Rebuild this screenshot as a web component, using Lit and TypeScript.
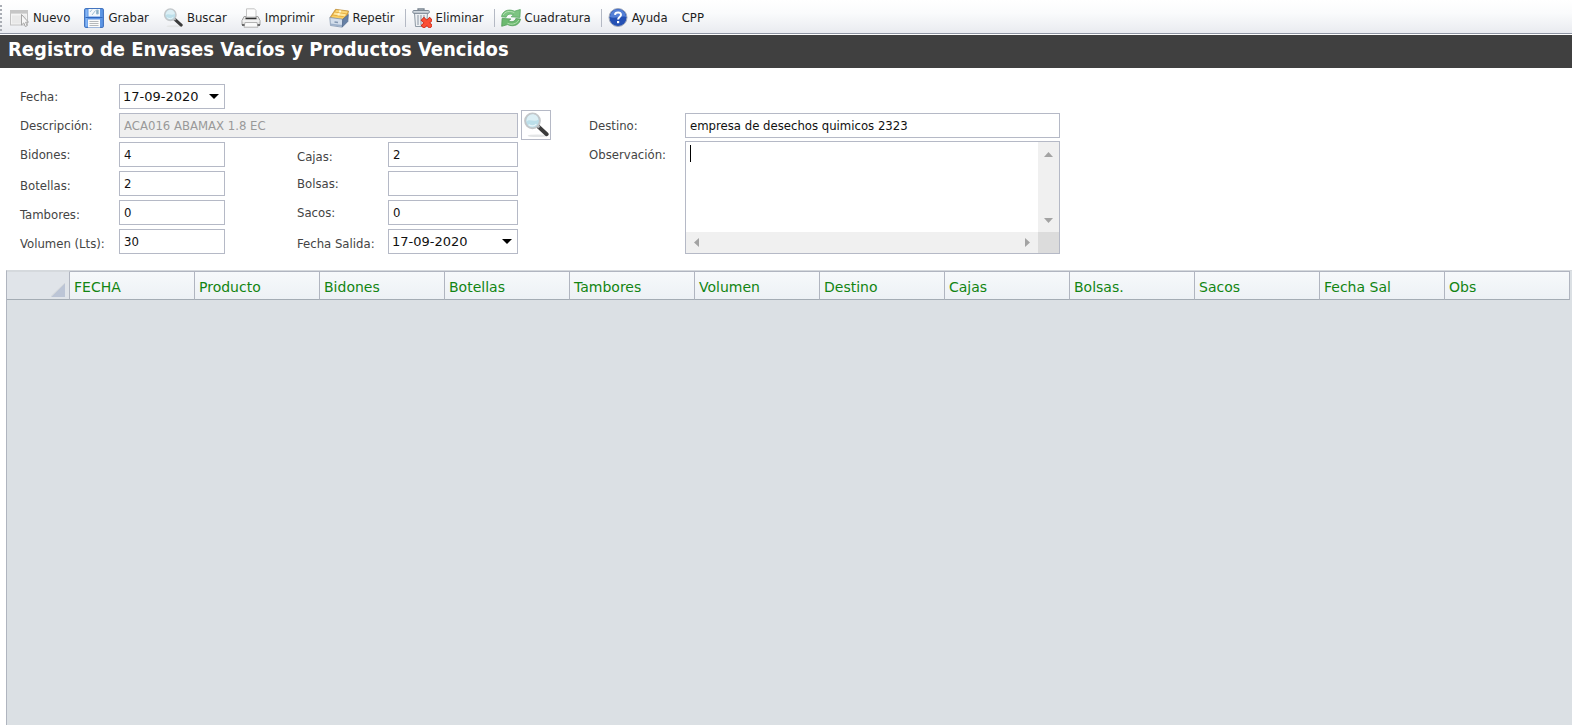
import { LitElement, html, css, TemplateResult } from "lit";
import { customElement, property } from "lit/decorators.js";

const icons: Record<string, TemplateResult> = {
  nuevo: html`<svg viewBox="0 0 20 20" width="20" height="20" aria-hidden="true">
    <rect x="1.5" y="2.5" width="17" height="14.5" fill="#f4f4f4" stroke="#c2c2c2" />
    <rect x="1" y="2" width="18" height="3.6" fill="#c6c6c6" />
    <path d="M3 7.5h14v8H3z" fill="#e9e9e9" />
    <path d="M12.5 6.500v10.500l2.300-2.100 1.500 3.600 1.900-.8-1.600-3.500h2.900z" fill="#f7f7f7" stroke="#9d9d9d" stroke-width=".9" />
  </svg>`,
  grabar: html`<svg viewBox="0 0 20 20" width="20" height="20" aria-hidden="true">
    <rect x=".6" y=".6" width="18.800" height="18.800" rx="1" fill="#5b95e4" stroke="#3a6cba" />
    <rect x="1.500" y="1.500" width="2" height="17" fill="#86b6f4" />
    <rect x="4.500" y="1" width="11.500" height="7.500" fill="#f3f8fb" />
    <path d="M6 4l2-2.500M8 7l3.500-4.500M12.500 2h1.700v4h-1.700z" stroke="#9fbfd2" fill="#7fa5bd" />
    <path d="M1.500 9.500h17" stroke="#2f66bd" />
    <rect x="4" y="11.500" width="12" height="8" fill="#fafafa" />
    <path d="M5.500 13.500h9M5.500 15.500h9M5.500 17.500h9" stroke="#b5b8bb" />
  </svg>`,
  lupa: html`<svg viewBox="0 0 20 20" width="100%" height="100%" aria-hidden="true">
    <ellipse cx="11" cy="18.300" rx="7.500" ry="1" fill="#e3e5e6" />
    <path d="M11.300 10.800l6.900 6.300" stroke="#3b3b3b" stroke-width="3" stroke-linecap="round" />
    <path d="M11 10.400l1.600 1.500" stroke="#a9adb0" stroke-width="2" />
    <circle cx="7.300" cy="6.800" r="5.700" fill="#bcdfea" stroke="#c3c7ca" stroke-width="1.500" />
    <path d="M2.800 7.500c2-2.800 5.500.5 9-1.600-.2-2.500-2-4.200-4.500-4.200S2.600 4 2.800 7.500z" fill="#dceff5" />
    <path d="M4.300 9.700c2 1.300 4.400 1.200 6-.4" stroke="#e9f6fa" fill="none" />
  </svg>`,
  imprimir: html`<svg viewBox="0 0 20 20" width="20" height="20" aria-hidden="true">
    <path d="M5.500 9V.800h8L15 2.500V9z" fill="#fdfdfd" stroke="#c4c4c4" />
    <path d="M3 8.500L1 12.500v4.500h18v-4.500l-2-4h-2V10H5V8.500z" fill="#e4e4e4" stroke="#a3a3a3" />
    <path d="M4.500 10.500h11" stroke="#333" stroke-width="1.400" />
    <path d="M1.500 13h17" stroke="#fff" />
    <path d="M4 14.500h12l1 4.700H3z" fill="#fafafa" stroke="#b3b3b3" />
    <path d="M1 17h2.500M16.500 17H19" stroke="#4d4d4d" stroke-width="1.400" />
  </svg>`,
  repetir: html`<svg viewBox="0 0 20 20" width="20" height="20" aria-hidden="true">
    <path d="M1 9.500L6.500 1.300 19.500 3l-1.500 7.500L13.500 14z" fill="#e6ac3f" stroke="#b98a35" stroke-width=".7" />
    <path d="M7.300 1.900l11.500 1.500-1 2L6.200 3.700z" fill="#fbd777" />
    <path d="M5.500 4.600L17 6.300l-1 2.200L4.200 6.600z" fill="#ffe79a" />
    <path d="M3.600 7.400l11.600 1.800-1 2L2.200 9.200z" fill="#fbcf62" />
    <path d="M10.300 2.300l2 .3-.5 1.900-2-.3zM9 5.200l2 .3-.6 2-2-.3z" fill="#fff6d3" />
    <path d="M.8 9.500l13 1.700-.5 8L1.500 17.500z" fill="#d3deeb" stroke="#8295ae" stroke-width=".8" />
    <path d="M1.500 15.500l12 1.600v1.600L2 17.200z" fill="#9cb0ca" />
    <path d="M13.800 11.200l5.500-4.700-.5 7-5.500 5.500z" fill="#6680a5" stroke="#566d90" stroke-width=".8" />
    <path d="M5.500 14l3.500.5" stroke="#8297b1" stroke-width="1.500" />
  </svg>`,
  eliminar: html`<svg viewBox="0 0 20 20" width="20" height="20" aria-hidden="true">
    <path d="M2.500 5h13l-1 13.500h-11z" fill="#edf0f3" stroke="#8e99a4" />
    <path d="M6 7v10M9 7v10M12 7v4" stroke="#a0aab4" stroke-width="1.300" />
    <path d="M6 2.500V1h6v1.500" fill="none" stroke="#77828e" stroke-width="1.300" />
    <rect x=".8" y="2.500" width="16.500" height="2.800" rx="1" fill="#cfd6dd" stroke="#7c8894" />
    <path d="M12 12.200l5.600 5.300M17.600 12.200L12 17.500" stroke="#c4281a" stroke-width="4.800" stroke-linecap="square" />
    <path d="M12 12.200l5.600 5.300M17.600 12.200L12 17.500" stroke="#fb4f34" stroke-width="3.400" stroke-linecap="square" />
  </svg>`,
  cuadratura: html`<svg viewBox="0 0 20 20" width="20" height="20" aria-hidden="true">
    <path d="M.6 8.800C1 3.500 7 .2 13.500 3.200l5.800-1.700-.4 7.900-8.700-.6 2.300-1.900C9.200 5.300 6 6.200 5.200 9.200z" fill="#7dc482" stroke="#5ba864" stroke-width=".8" />
    <path d="M19.400 11c-.4 5.300-6.400 8.600-12.900 5.600L.7 18.300l.4-7.900 8.700.6-2.300 1.900c3.300 1.600 6.500.7 7.300-2.300z" fill="#6cba70" stroke="#519c58" stroke-width=".8" />
    <path d="M2.200 7C4 3.500 8.500 2.300 13.300 4.600M6.500 15.300c4.300 1.800 9 .7 11.400-3.200" stroke="#b4e0b2" fill="none" />
  </svg>`,
  ayuda: html`<svg viewBox="0 0 20 20" width="20" height="20" aria-hidden="true">
    <circle cx="10" cy="9.500" r="9" fill="#2450b4" stroke="#a3abbb" />
    <path d="M2 9a8 7.700 0 0 1 16 0c-5-2-11 2.500-16 0z" fill="#5580d6" />
    <path d="M7 6.800c.3-3.200 6.200-3.200 6 .2-.1 2-2.900 2-2.900 4.500" fill="none" stroke="#fff" stroke-width="2" />
    <rect x="9" y="13" width="2.200" height="2.200" fill="#fff" />
  </svg>`,
};

@customElement("tool-bar")
class ToolBar extends LitElement {
  static styles = css`
    :host {
      display: flex;
      align-items: center;
      height: 34px;
      box-sizing: border-box;
      padding: 2px 0 0 9px;
      background:
        repeating-linear-gradient(#a9adb4 0 2px, transparent 2px 4px) 0 5px / 2px 26px no-repeat,
        linear-gradient(#ffffff, #fafbfc 40%, #e9ebf0);
      border-bottom: 1px solid #8f95a3;
      font: 13px/20px "DejaVu Sans Condensed", "DejaVu Sans", sans-serif;
    }
    .tool {
      display: flex;
      align-items: center;
      gap: 4px;
      margin-right: 14px;
      padding: 0;
      border: 0;
      background: none;
      font: inherit;
      color: #1e1e1e;
      white-space: nowrap;
    }
    .icon {
      width: 20px;
      height: 20px;
    }
    .before-rule {
      margin-right: 10px;
    }
    .rule {
      width: 1px;
      height: 18px;
      margin-right: 6px;
      background: #b4b9c4;
    }
  `;

  private tool(name: string, icon: string, rule = false) {
    return html`<button type="button" class="tool ${rule ? "before-rule" : ""}">
        ${icon ? html`<span class="icon">${icons[icon]}</span>` : ""}<span>${name}</span>
      </button>
      ${rule ? html`<span class="rule"></span>` : ""}`;
  }

  render() {
    return html`${this.tool("Nuevo", "nuevo")} ${this.tool("Grabar", "grabar")}
    ${this.tool("Buscar", "lupa")} ${this.tool("Imprimir", "imprimir")}
    ${this.tool("Repetir", "repetir", true)} ${this.tool("Eliminar", "eliminar", true)}
    ${this.tool("Cuadratura", "cuadratura", true)} ${this.tool("Ayuda", "ayuda")}
    ${this.tool("CPP", "")}`;
  }
}

@customElement("envases-form")
class EnvasesForm extends LitElement {
  static styles = css`
    :host {
      display: block;
      font: 13px/26px "DejaVu Sans Condensed", "DejaVu Sans", sans-serif;
      color: #444;
    }
    form {
      display: grid;
      grid-template-columns: 99px 106px 72px 91px 130px 3px 30px 38px 96px minmax(200px, 375px);
      grid-auto-rows: 29px;
      align-items: start;
      padding: 16px 20px 12px;
    }
    .c1 { grid-column: 1; }
    .c2 { grid-column: 2; }
    .c4 { grid-column: 4; }
    .c5 { grid-column: 5; }
    .c9 { grid-column: 9; }
    .c10 { grid-column: 10; }
    .wide { grid-column: 2 / 6; }
    .r1 { grid-row: 1; }
    .r2 { grid-row: 2; }
    .r3 { grid-row: 3; }
    .r4 { grid-row: 4; }
    .r5 { grid-row: 5; }
    .r6 { grid-row: 6; }
    .low { padding-top: 2px; }
    .field {
      box-sizing: border-box;
      width: 100%;
      height: 25px;
      margin: 0;
      padding: 1px 4px 0;
      border: 1px solid #b5b9c6;
      border-radius: 0;
      background: #fff;
      font: inherit;
      color: #111;
      outline: none;
    }
    .field:disabled {
      background: #efefef;
      color: #999;
    }
    .date {
      appearance: none;
      font: 13px/22px "DejaVu Sans", sans-serif;
      padding: 0 3px;
      background: #fff
        url("data:image/svg+xml,%3Csvg xmlns='http://www.w3.org/2000/svg' width='10' height='5'%3E%3Cpath d='M0 0h10L5 5z'/%3E%3C/svg%3E")
        right 5px center no-repeat;
    }
    .find {
      grid-column: 7;
      grid-row: 2;
      width: 30px;
      height: 30px;
      margin-top: -3px;
      padding: 1px;
      border: 1px solid #b5b9c6;
      background: #fff;
      display: grid;
    }
    .memo {
      grid-row: 3 / 7;
      align-self: start;
      position: relative;
      display: grid;
      grid-template-columns: 1fr 21px;
      grid-template-rows: 90px 21px;
      margin-top: -1px;
      border: 1px solid #b5b9c6;
    }
    .memo textarea {
      box-sizing: border-box;
      width: 100%;
      height: 100%;
      border: 0;
      margin: 0;
      padding: 2px 4px;
      resize: none;
      outline: none;
      font: inherit;
      overflow: hidden;
    }
    .caret {
      position: absolute;
      left: 4px;
      top: 3px;
      width: 1px;
      height: 17px;
      background: #000;
    }
    .bar {
      display: flex;
      justify-content: space-between;
      align-items: center;
      background: #f0f0f0;
    }
    .vertical {
      flex-direction: column;
      padding: 10px 0 9px;
    }
    .horizontal {
      padding: 0 8px;
    }
    .corner {
      background: #dcdcdc;
    }
    .arrow {
      display: block;
      fill: #a3a3a3;
    }
  `;

  private text(id: string, label: string, value: string, row: string, right = false, low = false) {
    return html`<label for=${id} class="${right ? "c4" : "c1"} ${row} ${low ? "low" : ""}">${label}</label>
      <input id=${id} class="field ${right ? "c5" : "c2"} ${row}" .value=${value} />`;
  }

  render() {
    return html`<form>
      <label for="fecha" class="c1 r1">Fecha:</label>
      <select id="fecha" class="field date c2 r1"><option>17-09-2020</option></select>
      <label for="descripcion" class="c1 r2">Descripción:</label>
      <input id="descripcion" class="field wide r2" disabled .value=${"ACA016 ABAMAX 1.8 EC"} />
      <button type="button" class="find" aria-label="Buscar producto">${icons.lupa}</button>
      ${this.text("bidones", "Bidones:", "4", "r3")}
      ${this.text("botellas", "Botellas:", "2", "r4", false, true)}
      ${this.text("tambores", "Tambores:", "0", "r5", false, true)}
      ${this.text("volumen", "Volumen (Lts):", "30", "r6", false, true)}
      ${this.text("cajas", "Cajas:", "2", "r3", true, true)}
      ${this.text("bolsas", "Bolsas:", "", "r4", true)}
      ${this.text("sacos", "Sacos:", "0", "r5", true)}
      <label for="salida" class="c4 r6 low">Fecha Salida:</label>
      <select id="salida" class="field date c5 r6"><option>17-09-2020</option></select>
      <label for="destino" class="c9 r2">Destino:</label>
      <input id="destino" class="field c10 r2" .value=${"empresa de desechos quimicos 2323"} />
      <label for="observacion" class="c9 r3">Observación:</label>
      <div class="memo c10">
        <textarea id="observacion" wrap="off"></textarea>
        <div class="bar vertical">
          <svg class="arrow" width="9" height="5"><path d="M0 5h9L4.500 0z" /></svg>
          <svg class="arrow" width="9" height="5"><path d="M0 0h9L4.500 5z" /></svg>
        </div>
        <div class="bar horizontal">
          <svg class="arrow" width="5" height="9"><path d="M5 0v9L0 4.500z" /></svg>
          <svg class="arrow" width="5" height="9"><path d="M0 0v9l5-4.500z" /></svg>
        </div>
        <div class="corner"></div>
        <span class="caret"></span>
      </div>
    </form>`;
  }
}

@customElement("envases-grid")
class EnvasesGrid extends LitElement {
  @property({ attribute: false }) columns: string[] = [];

  static styles = css`
    :host {
      display: block;
      box-sizing: border-box;
      background: #dbe0e4;
      border-left: 1px solid #b0b5bf;
      border-top: 1px solid #d5d9dd;
    }
    table {
      width: calc(100% - 2px);
      table-layout: fixed;
      border-collapse: separate;
      border-spacing: 0;
      font: 14px/20px "DejaVu Sans", sans-serif;
    }
    th {
      box-sizing: border-box;
      height: 29px;
      padding: 3px 0 0 4px;
      text-align: left;
      font-weight: normal;
      color: #128512;
      background: linear-gradient(#f6f9fb, #edf1f5);
      border: solid #b0b5c0;
      border-width: 1px 1px 1px 0;
      border-bottom-color: #a4acb4;
      white-space: nowrap;
    }
    .select-all {
      width: 63px;
      padding: 9px 4px 0 0;
      background: #e0e4e9;
      border-top-color: #d5d9dd;
    }
    .select-all svg {
      display: block;
      margin-left: auto;
    }
  `;

  render() {
    return html`<table>
      <thead>
        <tr>
          <th class="select-all" aria-label="Seleccionar todo">
            <svg width="14" height="14" aria-hidden="true">
              <path d="M14 0v14H0z" fill="#bcc5d6" />
              <path d="M0 13.500L14 0" stroke="#d2d5d8" />
            </svg>
          </th>
          ${this.columns.map((name) => html`<th>${name}</th>`)}
        </tr>
      </thead>
    </table>`;
  }
}

@customElement("app-root")
class AppRoot extends LitElement {
  static styles = css`
    :host {
      display: flex;
      flex-direction: column;
      min-height: 100vh;
      background: #fff;
    }
    .title {
      margin: 1px 0 0;
      padding: 0 8px 5px;
      background: #404040;
      color: #fff;
      font: bold 20px/28px "DejaVu Sans Condensed", "DejaVu Sans", sans-serif;
    }
    .grid {
      flex: 1;
      margin-left: 6px;
    }
  `;

  private columns = [
    "FECHA", "Producto", "Bidones", "Botellas", "Tambores", "Volumen",
    "Destino", "Cajas", "Bolsas.", "Sacos", "Fecha Sal", "Obs",
  ];

  render() {
    return html`<tool-bar></tool-bar>
      <h1 class="title">Registro de Envases Vacíos y Productos Vencidos</h1>
      <envases-form></envases-form>
      <envases-grid class="grid" .columns=${this.columns}></envases-grid>`;
  }
}
